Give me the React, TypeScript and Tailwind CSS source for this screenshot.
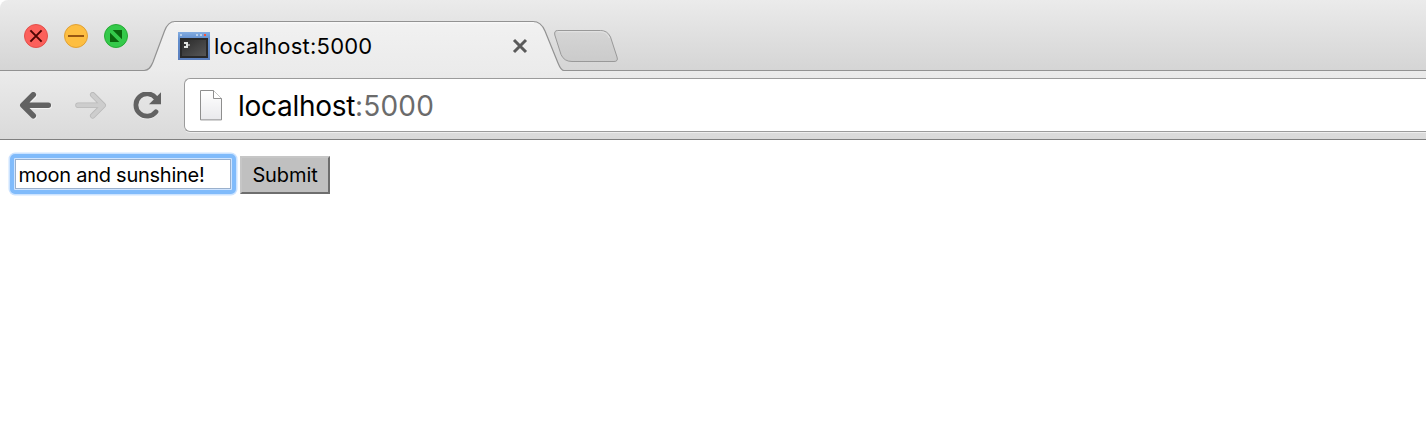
import React from "react";

function TrafficLights() {
  return (
    <div className="ml-6 flex h-[72px] w-[104px] items-center gap-4">
      <svg className="size-6 shrink-0" viewBox="0 0 24 24">
        <circle cx="12" cy="12" r="11.5" fill="#fc605b" stroke="#e2504b" />
        <path d="M6.400 6.400 17.600 17.600M17.600 6.400 6.400 17.600" stroke="#4f0504" strokeWidth="2" />
      </svg>
      <svg className="size-6 shrink-0" viewBox="0 0 24 24">
        <circle cx="12" cy="12" r="11.5" fill="#fdbe41" stroke="#e0a034" />
        <path d="M4 12H20" stroke="#985712" strokeWidth="2" />
      </svg>
      <svg className="size-6 shrink-0" viewBox="0 0 24 24">
        <circle cx="12" cy="12" r="11.5" fill="#34c94a" stroke="#27ab35" />
        <path d="M8.700 6H18V15.300ZM6 8.700V18H15.300Z" fill="#0a650d" />
      </svg>
    </div>
  );
}

function TerminalIcon() {
  return (
    <svg className="h-7 w-8 shrink-0" viewBox="0 0 32 28" shapeRendering="crispEdges">
      <defs>
        <linearGradient id="frame" x1="0" y1="0" x2="0" y2="1">
          <stop offset="0" stopColor="#84aee2" />
          <stop offset=".25" stopColor="#638fce" />
          <stop offset="1" stopColor="#5a7ebd" />
        </linearGradient>
        <linearGradient id="screen" x1="0" y1="0" x2="1" y2="1">
          <stop offset="0" stopColor="#2b2b2b" />
          <stop offset="1" stopColor="#575757" />
        </linearGradient>
      </defs>
      <path d="M0 0H32V28H0Z" fill="url(#frame)" />
      <path d="M2 6H30V26H2Z" fill="#292929" />
      <path d="M4 8H28V24H4Z" fill="url(#screen)" />
      <path d="M2 2H4V4H2ZM18 2H20V4H18ZM22 2H24V4H22Z" fill="#b8cfea" />
      <path d="M26 2H28V4H26Z" fill="#fb5138" />
      <path d="M6 10H8V12H6ZM8 10H10V12H8ZM8 12H10V14H8ZM6 14H10V16H6Z" fill="#e2e5e2" />
      <path d="M10 12H12V14H10Z" fill="#949494" />
    </svg>
  );
}

function Tab() {
  return (
    <div className="relative ml-4 h-[72px] w-[420px]">
      <svg className="absolute inset-0 h-[72px] w-[420px]" viewBox="0 0 420 72">
        <defs>
          <linearGradient id="tab" x1="0" y1="0" x2="0" y2="1">
            <stop offset="0" stopColor="#f1f1f1" />
            <stop offset="1" stopColor="#ebebeb" />
          </linearGradient>
        </defs>
        <path d="M0 72V70.5C5 70.5 7 67 9 62L20.500 31Q24 21.500 31 21.500H389Q397 21.500 401 31L414 63Q417 70.500 420 70.500V72Z" fill="url(#tab)" />
        <path d="M0 70.5C5 70.5 7 67 9 62L20.500 31Q24 21.500 31 21.500H389Q397 21.500 401 31L414 63Q417 70.500 420 70.500" fill="none" stroke="#929292" strokeWidth="1.2" />
        <path d="M30 22.800H390" stroke="#fafafa" />
      </svg>
      <div className="relative flex h-[72px] items-center pl-[34px] pt-5">
        <TerminalIcon />
        <span className="ml-1 w-[298px] whitespace-nowrap text-[22px] leading-7 tracking-[0.22px] text-black">localhost:5000</span>
        <svg className="size-4 shrink-0" viewBox="0 0 16 16">
          <path d="M2 2 14 14M14 2 2 14" stroke="#5a5a5a" strokeWidth="3" />
        </svg>
      </div>
    </div>
  );
}

function NewTabButton() {
  return (
    <svg className="mt-7 -ml-3 h-9 w-[68px] shrink-0" viewBox="552 28 68 36">
      <defs>
        <linearGradient id="newtab" x1="0" y1="0" x2="0" y2="1">
          <stop offset="0" stopColor="#d5d5d5" />
          <stop offset="1" stopColor="#cbcbcb" />
        </linearGradient>
      </defs>
      <path d="M557.500 30.500H600.500Q607.500 30.500 610.500 37L617 57Q618.500 61.500 614 61.500H572Q564 61.500 561 54.500L554.800 35Q554 30.500 557.500 30.500Z" fill="url(#newtab)" stroke="#999" />
      <path d="M558 31.700H600.500Q606.500 31.700 609.500 38" fill="none" stroke="#e4e4e4" />
    </svg>
  );
}

function NavigationIcons() {
  return (
    <div className="flex items-center pt-[2px]">
      <svg className="ml-[19px] h-7 w-[34px]" viewBox="19 92 34 28">
        <path d="M49 106.300H24M34 96 23.500 106.300 34 116.600" fill="none" stroke="#f4f4f4" strokeWidth="5.500" strokeLinecap="round" strokeLinejoin="round" />
        <path d="M48.300 105.300H24M33.300 94.800 22.800 105.300 33.300 115.800" fill="none" stroke="#626262" strokeWidth="5.500" strokeLinecap="round" strokeLinejoin="round" />
      </svg>
      <svg className="ml-[21px] h-7 w-[34px]" viewBox="74 92 34 28">
        <path d="M78 105.300H102M92.700 94.800 103.200 105.300 92.700 115.800" fill="none" stroke="#b8b8b8" strokeWidth="5.500" strokeLinecap="round" strokeLinejoin="round" />
        <path d="M78 105.300H102M92.700 94.800 103.200 105.300 92.700 115.800" fill="none" stroke="#cdcdcd" strokeWidth="4" strokeLinecap="round" strokeLinejoin="round" />
      </svg>
      <svg className="ml-6 h-7 w-8" viewBox="132 92 32 28">
        <path d="M156 112.400A11.200 11.200 0 1 1 156 98.800" fill="none" stroke="#f4f4f4" strokeWidth="4.800" strokeLinecap="round" />
        <path d="M156 111.800A11.200 11.200 0 1 1 156 98.200" fill="none" stroke="#626262" strokeWidth="4.800" strokeLinecap="round" />
        <path d="M161 92.300V104.300H149Z" fill="#626262" />
      </svg>
    </div>
  );
}

function AddressBar() {
  return (
    <div className="ml-5 flex h-[54px] flex-1 items-center rounded-l-md border border-r-0 border-[#9b9b9b] bg-white pl-[14px] shadow-[0_1px_0_#eeeeee]">
      <svg className="h-8 w-6 shrink-0" viewBox="199 89 24 32">
        <defs>
          <linearGradient id="page" x1="0" y1="0" x2="0" y2="1">
            <stop offset="0" stopColor="#fff" />
            <stop offset="1" stopColor="#e9e9ec" />
          </linearGradient>
        </defs>
        <path d="M200.500 90.500H213.500L221.500 98.500V119.900H200.500Z" fill="url(#page)" stroke="#8e8e8e" />
        <path d="M213.500 90.500V98.500H221.500" fill="#fff" stroke="#8e8e8e" />
      </svg>
      <span className="ml-[15px] whitespace-nowrap pt-[2px] text-[28px] leading-8 tracking-[-0.28px] text-black">
        localhost<span className="tracking-[0.15px] text-[#6b6b6b]">:5000</span>
      </span>
    </div>
  );
}

export default function App() {
  return (
    <div className="h-[428px] w-full overflow-hidden bg-white font-['Inter',sans-serif]">
      <header>
        <div className="flex h-[71px] rounded-tl-lg border-b border-[#929292] bg-linear-to-b from-[#ebebeb] to-[#d5d5d5]">
          <TrafficLights />
          <Tab />
          <NewTabButton />
        </div>
        <div className="flex h-[69px] items-center border-b border-[#808080] bg-linear-to-b from-[#ebebeb] to-[#dadada]">
          <NavigationIcons />
          <AddressBar />
        </div>
      </header>
      <main className="flex items-start pt-[14px] pl-[10px]">
        <div className="rounded-[5px] border-4 border-[#80bbfb] bg-[#cfe4ff] p-px shadow-[0_0_0_1.5px_#cce3ff]">
          <input
            type="text"
            aria-label="Message"
            defaultValue="moon and sunshine!"
            className="block h-[30px] w-[216px] rounded-none border border-[#9ab0cc] bg-white px-[2.500px] pt-[2px] text-[20px] tracking-[-0.25px] text-black outline-none"
          />
        </div>
        <button className="mt-[2px] ml-1 h-[38px] w-[90px] border-2 border-t-[#c6c6c6] border-r-[#6e6e6e] border-b-[#6e6e6e] border-l-[#c6c6c6] bg-[#c0c0c0] text-[20px] tracking-[-0.1px] text-black">
          Submit
        </button>
      </main>
    </div>
  );
}
